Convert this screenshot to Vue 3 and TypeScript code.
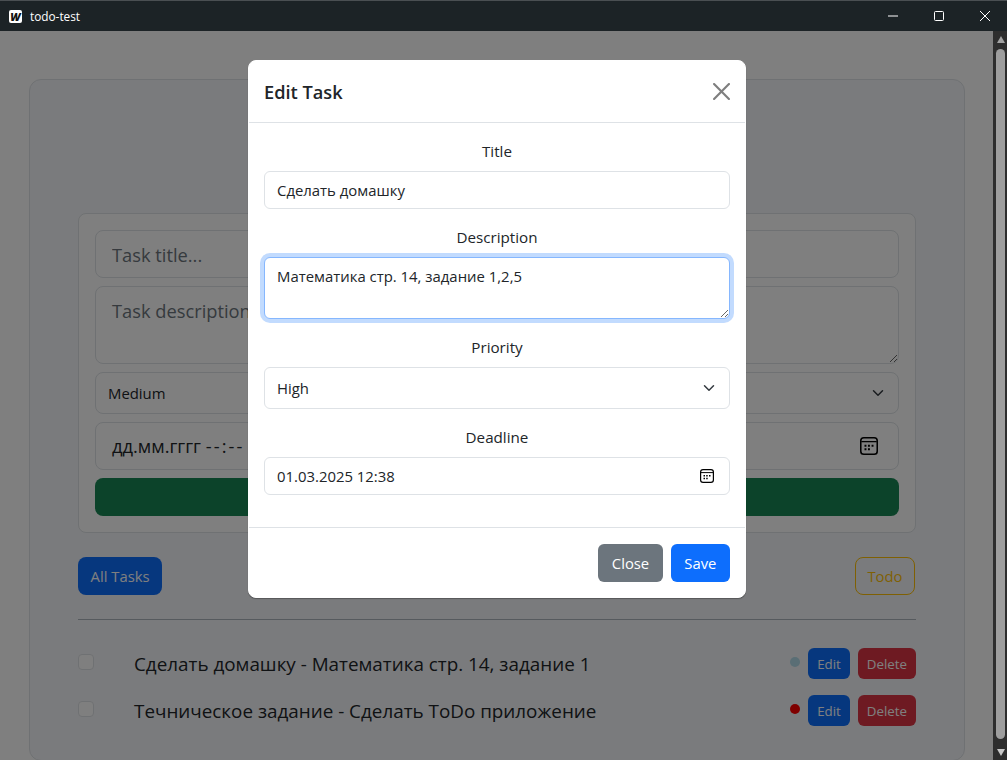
<script setup lang="ts">
import { ref } from 'vue';

type Task = { id: number; text: string; color: string };

const tasks: Task[] = [
  { id: 1, text: 'Сделать домашку - Математика стр. 14, задание 1', color: '#b4dcea' },
  { id: 2, text: 'Течническое задание - Сделать ToDo приложение', color: '#ff0000' },
];

const editTitle = ref('Сделать домашку');
const editDescription = ref('Математика стр. 14, задание 1,2,5');
const editPriority = ref('High');
</script>

<template>
  <div class="window">
    <header class="titlebar">
      <span class="appIcon">W</span>
      <span class="appName">todo-test</span>
      <div class="winControls">
        <svg width="10" height="10" viewBox="0 0 10 10"><path d="M0 5h10" stroke="#fff" fill="none" /></svg>
        <svg width="10" height="10" viewBox="0 0 10 10"><rect x=".5" y=".5" width="9" height="9" rx="1" stroke="#fff" fill="none" /></svg>
        <svg width="10" height="10" viewBox="0 0 10 10"><path d="M0 0l10 10M10 0L0 10" stroke="#fff" fill="none" /></svg>
      </div>
    </header>

    <div class="viewport">
      <main class="page">
        <section class="card">
          <form class="taskForm" @submit.prevent>
            <input class="control lg" type="text" placeholder="Task title..." />
            <textarea class="control lg formArea" placeholder="Task description..."></textarea>
            <div class="selectBox formSelect">
              <span>Medium</span>
              <svg class="chevron" width="16" height="12" viewBox="0 0 16 16"><path d="m2 5 6 6 6-6" fill="none" stroke="#343a40" stroke-width="2" stroke-linecap="round" stroke-linejoin="round" /></svg>
            </div>
            <div class="dateBox formDate">
              <span>дд.мм.гггг <span class="dashes">--:--</span></span>
              <svg width="18" height="18" viewBox="0 0 14 14"><rect x=".6" y=".6" width="12.8" height="12.8" rx="2.4" fill="none" stroke="#000" stroke-width="1.2" /><path d="M1 3.6h12" stroke="#000" /><path d="M3.5 6h1.5v1.5H3.5zM6.2 6h1.5v1.5H6.2zM9 6h1.5v1.5H9zM3.5 8.8h1.5v1.5H3.5zM6.2 8.8h1.5v1.5H6.2z" fill="#000" /></svg>
            </div>
            <button type="button" class="btn green">Add Task</button>
          </form>

          <div class="filters">
            <button type="button" class="btn blue big">All Tasks</button>
            <button type="button" class="btn outlineYellow big">Todo</button>
          </div>

          <hr class="divider" />

          <ul class="taskList">
            <li v-for="task in tasks" :key="task.id" class="taskRow">
              <span class="check"></span>
              <span class="taskText">{{ task.text }}</span>
              <span class="dot" :style="{ background: task.color }"></span>
              <button type="button" class="btn blue small">Edit</button>
              <button type="button" class="btn red small">Delete</button>
            </li>
          </ul>
        </section>

        <div class="overlay">
          <div class="modal">
            <div class="modalHeader">
              <h2 class="modalTitle">Edit Task</h2>
              <svg class="closeIcon" width="17" height="17" viewBox="0 0 16 16"><path d="M.293.293a1 1 0 0 1 1.414 0L8 6.586 14.293.293a1 1 0 1 1 1.414 1.414L9.414 8l6.293 6.293a1 1 0 0 1-1.414 1.414L8 9.414l-6.293 6.293a1 1 0 0 1-1.414-1.414L6.586 8 .293 1.707a1 1 0 0 1 0-1.414z" fill="#000" /></svg>
            </div>
            <div class="modalBody">
              <label class="fieldLabel">Title</label>
              <input v-model="editTitle" class="control" type="text" />
              <label class="fieldLabel">Description</label>
              <textarea v-model="editDescription" class="control focused"></textarea>
              <label class="fieldLabel">Priority</label>
              <div class="selectBox">
                <span>{{ editPriority }}</span>
                <svg class="chevron" width="16" height="12" viewBox="0 0 16 16"><path d="m2 5 6 6 6-6" fill="none" stroke="#343a40" stroke-width="2" stroke-linecap="round" stroke-linejoin="round" /></svg>
              </div>
              <label class="fieldLabel">Deadline</label>
              <div class="dateBox">
                <span>01.03.2025 12:38</span>
                <svg width="14" height="14" viewBox="0 0 14 14"><rect x=".6" y=".6" width="12.8" height="12.8" rx="2.4" fill="none" stroke="#000" stroke-width="1.2" /><path d="M1 3.6h12" stroke="#000" /><path d="M3.5 6h1.5v1.5H3.5zM6.2 6h1.5v1.5H6.2zM9 6h1.5v1.5H9zM3.5 8.8h1.5v1.5H3.5zM6.2 8.8h1.5v1.5H6.2z" fill="#000" /></svg>
              </div>
            </div>
            <div class="modalFooter">
              <button type="button" class="btn gray">Close</button>
              <button type="button" class="btn blue">Save</button>
            </div>
          </div>
        </div>
      </main>

      <div class="scrollbar">
        <span class="arrowUp"></span>
        <span class="thumb"></span>
        <span class="arrowDown"></span>
      </div>
    </div>
  </div>
</template>

<style>
html,
body {
  margin: 0;
  overflow: hidden;
}
</style>

<style scoped>
* {
  box-sizing: border-box;
}

.window {
  display: flex;
  flex-direction: column;
  height: 760px;
  font-family: 'Open Sans', 'Noto Sans', sans-serif;
  font-size: 15.2px;
  line-height: 24px;
  color: #212529;
}

.titlebar {
  display: flex;
  align-items: center;
  flex: 0 0 31px;
  padding-left: 9px;
  background: #1c2326;
  border-top: 1px solid #4a4f52;
  color: #fff;
}

.appIcon {
  display: flex;
  align-items: center;
  justify-content: center;
  width: 13px;
  height: 13px;
  border-radius: 2px;
  background: #fff;
  color: #111;
  font-size: 11px;
  font-weight: 800;
  font-style: italic;
  line-height: 13px;
}

.appName {
  margin-left: 8px;
  font-size: 11.8px;
}

.winControls {
  display: flex;
  gap: 36px;
  margin-left: auto;
  padding-right: 17px;
}

.viewport {
  display: flex;
  flex: 1;
  min-height: 0;
}

.page {
  position: relative;
  flex: 1;
  overflow: hidden;
  background: #fff;
}

.card {
  margin: 48px 28px 0 29px;
  padding: 133px 48px 34px;
  background: #f5f7fa;
  border: 1px solid #dee2e6;
  border-radius: 12px;
}

.taskForm {
  display: flex;
  flex-direction: column;
  gap: 8px;
  padding: 16px;
  background: #fff;
  border: 1px solid #dee2e6;
  border-radius: 8px;
}

.control {
  display: block;
  width: 100%;
  height: 38px;
  padding: 6px 12px;
  background: #fff;
  border: 1px solid #dee2e6;
  border-radius: 6px;
  font: inherit;
  font-size: 14.9px;
  color: inherit;
  outline: none;
}

.control::placeholder {
  color: #6c757d;
}

.lg {
  height: 48px;
  padding: 8px 16px;
  border-radius: 8px;
  font-size: 18.3px;
}

textarea.control {
  height: 62px;
  resize: vertical;
}

.formArea.control {
  height: 78px;
  padding-top: 12px;
}

.focused {
  border-color: #86b7fe;
  box-shadow: 0 0 0 4px rgba(13, 110, 253, 0.25);
}

.selectBox,
.dateBox {
  display: flex;
  align-items: center;
  justify-content: space-between;
  background: #fff;
  border: 1px solid #dee2e6;
  border-radius: 6px;
  padding: 0 12px;
  font-size: 14.9px;
}

.selectBox {
  height: 42px;
}

.dateBox {
  height: 38px;
  padding-right: 15px;
}

.formSelect {
  border-radius: 8px;
  padding: 0 12px;
}

.formDate {
  height: 48px;
  padding: 0 20px 0 16px;
  border-radius: 8px;
  font-size: 18.3px;
}

.dashes {
  letter-spacing: 2.1px;
}

.btn {
  display: inline-flex;
  align-items: center;
  justify-content: center;
  height: 38px;
  padding: 0 12px;
  border: 1px solid transparent;
  border-radius: 6px;
  font: inherit;
  font-size: 14.8px;
  color: #fff;
}

.green {
  background: #198754;
  width: 100%;
  border-radius: 8px;
}

.blue {
  background: #0d6efd;
}

.gray {
  background: #6c757d;
}

.red {
  background: #dc3545;
}

.big {
  border-radius: 8px;
  padding: 0 11.6px;
}

.outlineYellow {
  background: transparent;
  border-color: #ffc107;
  color: #ffc107;
}

.small {
  height: 31px;
  padding: 0 8px;
  font-size: 13.3px;
}

.filters {
  display: flex;
  justify-content: space-between;
  margin-top: 24px;
  padding-right: 1px;
}

.divider {
  height: 1px;
  margin: 24px 0 28px;
  border: 0;
  background: #adb5bd;
}

.taskList {
  display: flex;
  flex-direction: column;
  gap: 16px;
  margin: 0;
  padding: 0;
  list-style: none;
}

.taskRow {
  display: flex;
  align-items: center;
  gap: 8px;
  height: 31px;
}

.check {
  flex: none;
  width: 16px;
  height: 16px;
  margin: -3px 32px 0 0;
  background: #fff;
  border: 1px solid #dee2e6;
  border-radius: 4px;
}

.taskText {
  flex: 1;
  font-size: 18.85px;
}

.dot {
  flex: none;
  width: 10px;
  height: 10px;
  border-radius: 50%;
  margin-top: -3px;
}

.overlay {
  position: absolute;
  inset: 0;
  display: flex;
  justify-content: center;
  align-items: flex-start;
  padding: 29px 0 0 1px;
  background: rgba(0, 0, 0, 0.5);
}

.modal {
  width: 498px;
  background: #fff;
  border: 1px solid #fff;
  border-radius: 8px;
  box-shadow: 0 1px 1px rgba(0, 0, 0, 0.3);
}

.modalHeader {
  display: flex;
  align-items: center;
  justify-content: space-between;
  height: 62px;
  padding: 0 15px;
  border-bottom: 1px solid #dee2e6;
}

.modalTitle {
  margin: 0;
  font-size: 18.2px;
  font-weight: 600;
  line-height: 30px;
}

.closeIcon {
  opacity: 0.5;
}

.modalBody {
  display: flex;
  flex-direction: column;
  padding: 16px 15px 32px;
}

.fieldLabel {
  margin-bottom: 8px;
  text-align: center;
}

.control + .fieldLabel,
.selectBox + .fieldLabel {
  margin-top: 16px;
}

.modalFooter {
  display: flex;
  justify-content: flex-end;
  gap: 8px;
  padding: 16px 15px 15px;
  border-top: 1px solid #dee2e6;
}

.modalFooter .btn {
  padding: 0 12.6px;
}

.scrollbar {
  position: relative;
  flex: 0 0 14px;
  display: flex;
  flex-direction: column;
  align-items: center;
  padding: 5px 2px 4px 3px;
  background: #2e2e2e;
}

.arrowUp,
.arrowDown {
  flex: none;
  width: 0;
  height: 0;
  border-left: 4.5px solid transparent;
  border-right: 4.5px solid transparent;
}

.arrowUp {
  border-bottom: 7px solid #a3a3a3;
}

.arrowDown {
  border-top: 7px solid #c8c8c8;
}

.thumb {
  flex: 1;
  width: 9px;
  margin: 6px 0 10px;
  background: #9e9e9e;
  border-radius: 4.5px;
}
</style>
